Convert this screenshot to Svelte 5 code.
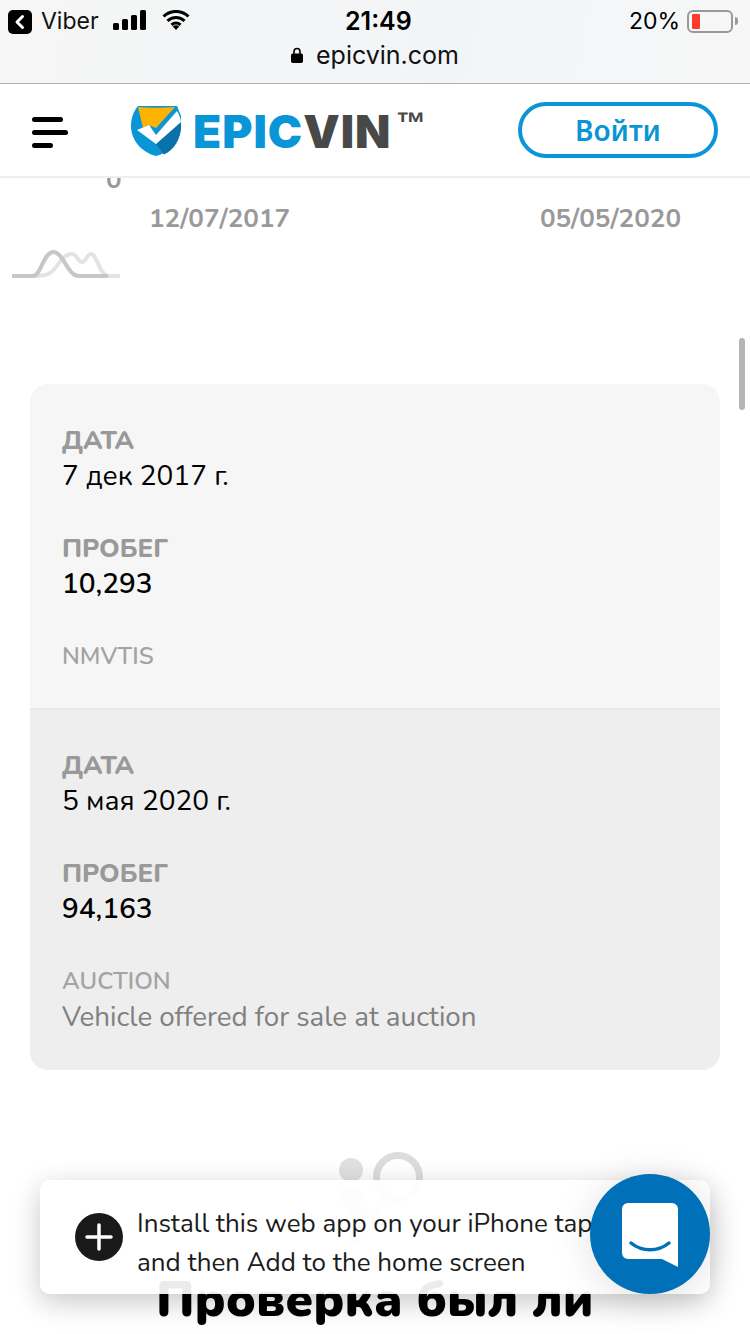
<script>
  const cards = [
    { date: '7 дек 2017 г.', miles: '10,293', source: 'NMVTIS', note: '' },
    { date: '5 мая 2020 г.', miles: '94,163', source: 'AUCTION', note: 'Vehicle offered for sale at auction' }
  ];
</script>

<div class="page">
  <div class="browser">
    <div class="status">
      <div class="left">
        <svg class="back" viewBox="0 0 24 24" width="24" height="24"><rect width="24" height="24" rx="5" fill="#000"/><path d="M14.500 6.500 9 12l5.500 5.500" fill="none" stroke="#fff" stroke-width="3" stroke-linecap="round" stroke-linejoin="round"/></svg>
        <span class="viber">Viber</span>
        <svg class="signal" viewBox="0 0 34 20" width="34" height="20"><rect x="0" y="13" width="6" height="7" rx="1.500"/><rect x="9" y="9" width="6" height="11" rx="1.500"/><rect x="18" y="5" width="6" height="15" rx="1.500"/><rect x="27" y="0" width="6" height="20" rx="1.500"/></svg>
        <svg class="wifi" viewBox="0 0 28 20" width="28" height="20"><path d="M1.500 6.500a18 18 0 0 1 25 0M5.500 10.800a12.300 12.300 0 0 1 17 0M9.500 14.800a6.500 6.500 0 0 1 9 0" fill="none" stroke="#000" stroke-width="3"/><path d="M14 20l-3.300-3.400a4.700 4.700 0 0 1 6.600 0z"/></svg>
      </div>
      <span class="time">21:49</span>
      <div class="right">
        <span class="pct">20%</span>
        <span class="battery"><span class="level"></span></span>
        <span class="nub"></span>
      </div>
    </div>
    <div class="url">
      <svg viewBox="0 0 12 16" width="12" height="16"><path d="M3 7V4.500a3 3 0 0 1 6 0V7" fill="none" stroke="#000" stroke-width="1.600"/><rect y="6.500" width="12" height="9.500" rx="1.800"/></svg>
      <span>epicvin.com</span>
    </div>
  </div>

  <header class="header">
    <div class="burger"><i class="long"></i><i class="wide"></i><i class="short"></i></div>
    <div class="logo">
      <svg viewBox="0 0 50 50" width="50" height="50">
        <path d="M7 0C2 6 0 13 0 20c0 14 10 26 25 30 15-4 25-16 25-30V10L46 0z" fill="#0a95d6"/>
        <path d="M50 16 25 38l8 10.500C43 44 50 33 50 20z" fill="#0a72a8"/>
        <path d="M7 1c12 1 25 1 37 0L25 22l-8-3-5 3z" fill="#fdb201"/>
        <path d="M6 24l12-5 7 10L46 5c2 3 3.500 7 4 11L25 38z" fill="#fff"/>
      </svg>
      <span class="word"><b>EPIC</b><em>VIN</em></span>
      <span class="tm">™</span>
    </div>
    <button class="login">Войти</button>
  </header>

  <main class="content">
    <div class="axis">
      <span class="zero">0</span>
      <div class="dates"><span>12/07/2017</span><span>05/05/2020</span></div>
    </div>
    <svg class="spark" viewBox="0 0 108 32" width="108" height="32">
      <path d="M21 29c14 0 18-1 26-13 4-6 8-9 13-9 5 0 6 8 10 8 4 0 5-8 9-8 6 0 9 22 17 22h12" fill="none" stroke="#e3e3e3" stroke-width="4"/>
      <path d="M0 29h21c8 0 10-23 20-24 11 0 14 24 26 24h29" fill="none" stroke="#c7c7c7" stroke-width="4"/>
    </svg>

    <section class="card">
      {#each cards as c, i}
        <div class="row" class:alt={i === 1}>
          <div class="field"><h4>ДАТА</h4><p>{c.date}</p></div>
          <div class="field"><h4>ПРОБЕГ</h4><p class="num">{c.miles}</p></div>
          <div class="field last">
            <h4 class="src">{c.source}</h4>
            {#if c.note}<p class="note">{c.note}</p>{/if}
          </div>
        </div>
      {/each}
    </section>

    <div class="promo">
      <svg viewBox="0 0 100 110" width="100" height="110">
        <circle cx="26" cy="22" r="12" fill="#e0e0e0"/>
        <path d="M14 42c8-5 20-4 24 4l8 22-14 30-10-4 6-24-14-18z" fill="#e6e6e6"/>
        <circle cx="73" cy="29" r="21.500" fill="none" stroke="#dcdcdc" stroke-width="7"/>
        <path d="M60 50 48 70" stroke="#dcdcdc" stroke-width="7" stroke-linecap="round"/>
      </svg>
      <h2>Проверка был ли</h2>
    </div>
  </main>

  <div class="toast">
    <svg class="plus" viewBox="0 0 48 48" width="48" height="48"><circle cx="24" cy="24" r="24" fill="#1a1a1a"/><path d="M24 12v24M12 24h24" stroke="#fff" stroke-width="3.500" stroke-linecap="round"/></svg>
    <div class="msg">Install this web app on your iPhone tap<br/>and then Add to the home screen</div>
  </div>
  <div class="chat">
    <svg viewBox="0 0 56 64" width="56" height="64"><path d="M6 0h44a6 6 0 0 1 6 6v58l-16-8H6a6 6 0 0 1-6-6V6a6 6 0 0 1 6-6z" fill="#fff"/><path d="M9 40c11 9 27 9 38 0" fill="none" stroke="#0071b8" stroke-width="3.500" stroke-linecap="round"/></svg>
  </div>
  <div class="scroll"></div>
</div>

<style>
  :global(body) { margin: 0; background: #fff; }
  .page {
    position: relative; width: 750px; height: 1334px; overflow: hidden;
    font-family: "Nunito", "Noto Sans", "Open Sans", sans-serif; color: #000; background: #fff;
  }
  .browser {
    box-sizing: border-box; border-bottom: 1px solid #b2b2b2; height: 84px;
    background: linear-gradient(100deg, #f6f6f6, #f2f5f7 60%, #f7f7f7);
    font-family: "Inter", "Noto Sans", sans-serif;
  }
  .status { position: relative; display: flex; justify-content: space-between; align-items: center; height: 42px; padding: 0 12px 0 8px; }
  .left { display: flex; align-items: center; }
  .back { margin-top: 1px; }
  .viber { font-size: 23px; margin-left: 9px; color: #111; }
  .signal { margin-left: 14px; margin-top: -2px; }
  .wifi { margin-left: 15px; margin-top: -2px; }
  .time { position: absolute; left: 345px; font-size: 25px; font-weight: 600; }
  .right { display: flex; align-items: center; }
  .pct { font-size: 23px; margin-right: 7px; }
  .battery { width: 46px; height: 23px; box-sizing: border-box; border: 2px solid #999; border-radius: 6px; padding: 2px; display: flex; }
  .level { width: 8px; background: #ff3b30; border-radius: 1px; margin-left: 1px; }
  .nub { width: 3px; height: 8px; background: #999; margin-left: 2px; border-radius: 0 3px 3px 0; }
  .url { display: flex; justify-content: center; align-items: center; gap: 13px; font-size: 25px; color: #111; height: 26px; }

  .header { height: 94px; box-sizing: border-box; display: flex; align-items: center; padding: 0 32px; border-bottom: 2px solid #eee; position: relative; z-index: 1; background: #fff; }
  .burger { display: flex; flex-direction: column; gap: 8px; width: 36px; margin-top: 4px; }
  .burger i { display: block; height: 5px; border-radius: 3px; background: #000; }
  .burger .long { width: 31px; }
  .burger .wide { width: 36px; }
  .burger .short { width: 21px; }
  .logo { display: flex; align-items: center; margin-left: 63px; margin-top: 1px; position: relative; width: 292px; height: 50px; }
  .word { font-family: "Inter", "Roboto", sans-serif; font-weight: 900; font-size: 46px; letter-spacing: 1px; line-height: 1; margin-left: 12px; white-space: nowrap; }
  .word b { color: #0a95d6; font-weight: 900; }
  .word em { color: #484848; font-style: normal; }
  .tm { position: absolute; left: 265px; top: 2px; font-family: "Liberation Sans", sans-serif; font-weight: 700; font-size: 30px; color: #484848; line-height: 1; }
  .login { margin-left: auto; width: 200px; height: 56px; border-radius: 28px; border: 4px solid #0a95d6; background: #fff; color: #0a95d6; font: 600 28px "Noto Sans", sans-serif; padding: 0; }

  .axis { position: relative; height: 66px; padding-left: 149px; padding-right: 69px; }
  .zero { position: absolute; left: 106px; top: -10px; font-weight: 700; font-size: 26px; color: #999; line-height: 24px; }
  .dates { display: flex; justify-content: space-between; padding-top: 25px; font-weight: 700; font-size: 26px; line-height: 32px; color: #999; }
  .spark { display: block; margin: 3px 0 0 12px; }
  .card { margin: 105px 30px 0; border-radius: 18px; overflow: hidden; background: #f6f6f6; }
  .row { padding: 38px 32px 0; height: 324px; box-sizing: border-box; }
  .row.alt { background: #eee; border-top: 2px solid #e8e8e8; height: 362px; padding-top: 37px; }
  .field { height: 108px; }
  .field h4 { margin: 0 0 -1px; padding-top: 1px; font-size: 26px; font-weight: 800; line-height: 36px; color: #999; }
  .field p { margin: 0; font-size: 28px; line-height: 36px; color: #000; }
  .field .num { font-weight: 600; }
  .field .src { margin: 0; padding-top: 0; font-size: 24px; font-weight: 600; color: #a3a3a3; }
  .field .note { color: #808080; font-size: 27.750px; }
  .promo { margin-top: 78px; display: flex; flex-direction: column; align-items: center; }
  .promo h2 { margin: 12px 0 0; font-size: 49px; line-height: 60px; font-weight: 900; white-space: nowrap; }

  .toast { position: absolute; left: 40px; top: 1180px; width: 670px; height: 114px; box-sizing: border-box; background: rgba(255,255,255,.92); border-radius: 10px; box-shadow: 0 8px 28px rgba(0,0,0,.22); display: flex; align-items: center; padding-left: 35px; }
  .msg { margin: 11px 0 0 14px; font-size: 26px; line-height: 39px; color: #1c1c1c; white-space: nowrap; }
  .chat { position: absolute; left: 590px; top: 1174px; width: 120px; height: 120px; border-radius: 50%; background: #0071b8; display: flex; align-items: center; justify-content: center; box-shadow: 0 4px 40px rgba(0,0,0,.12); }
  .chat svg { margin-top: 2px; }
  .scroll { position: absolute; left: 739px; top: 338px; width: 6px; height: 72px; border-radius: 3px; background: #b5b5b5; }
</style>
